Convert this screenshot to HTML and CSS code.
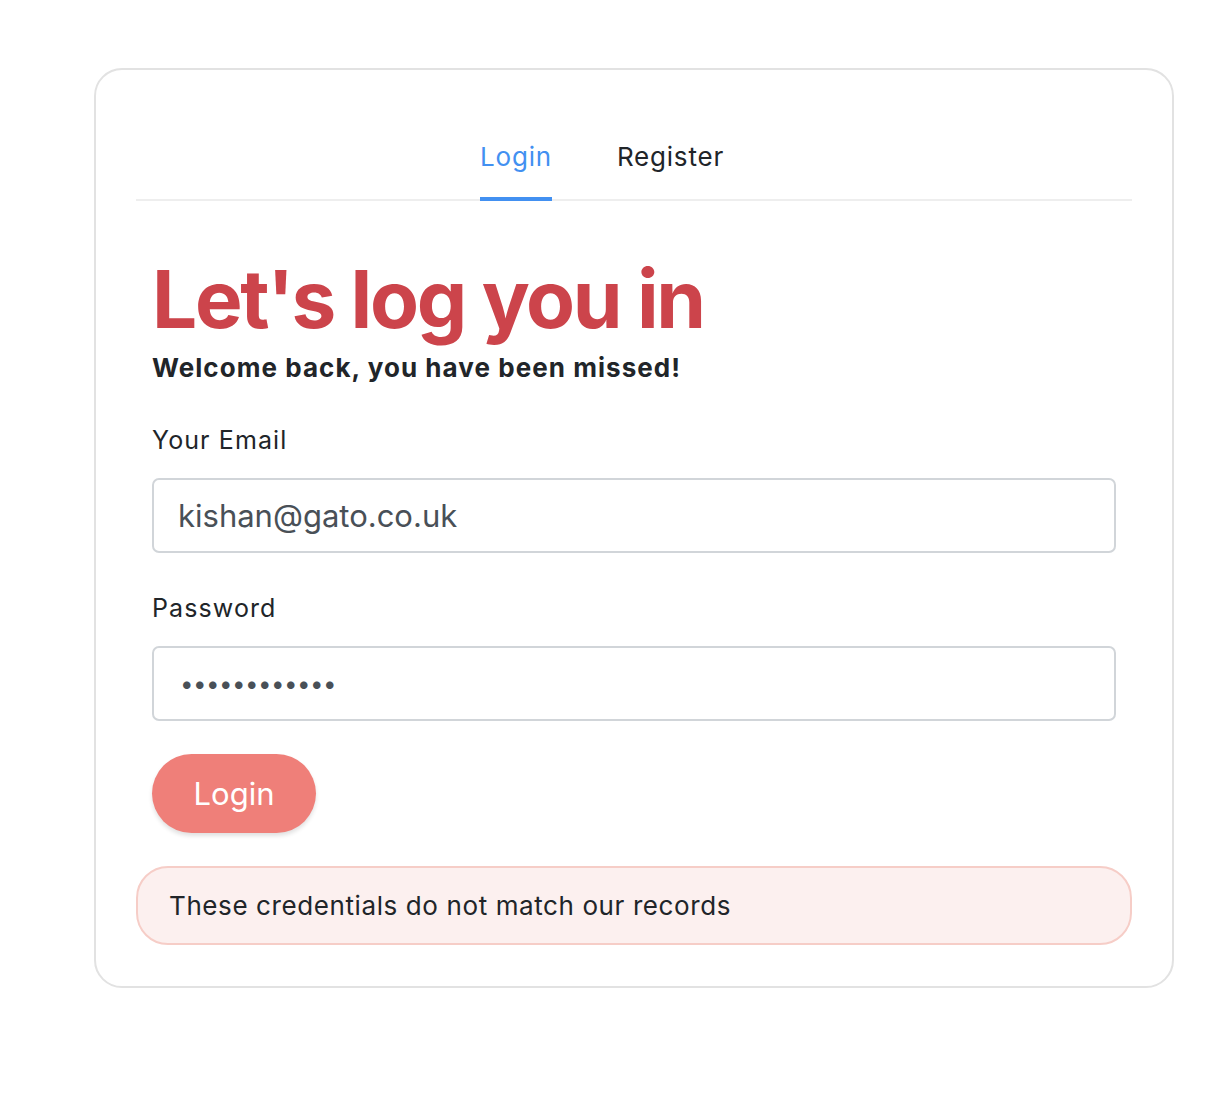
FILE: index.html
```html
<!DOCTYPE html>
<html lang="en">
<head>
<meta charset="utf-8">
<title>Login</title>
<link rel="stylesheet" href="styles.css">
</head>
<body>
<div class="card">
  <nav class="tabs">
    <a class="tab active" href="#">Login</a>
    <a class="tab" href="#">Register</a>
  </nav>
  <form class="form">
    <h1 class="title">Let's log you in</h1>
    <p class="subtitle">Welcome back, you have been missed!</p>
    <label class="label" for="email">Your Email</label>
    <input class="input" id="email" type="email" value="kishan@gato.co.uk">
    <label class="label" for="pw">Password</label>
    <input class="input pw" id="pw" type="password" value="abcdefghijkl">
    <button class="btn" type="button">Login</button>
  </form>
  <div class="alert">These credentials do not match our records</div>
</div>
</body>
</html>
```
FILE: styles.css
```css
* { box-sizing: border-box; }
body {
  margin: 0;
  background: #fff;
  font-family: Inter, "Noto Sans", sans-serif;
  color: #212529;
}
.card {
  margin: 68px 0 0 94px;
  width: 1080px;
  height: 920px;
  border: 2px solid #e2e2e2;
  border-radius: 28px;
  padding: 67px 40px 40px;
}
.tabs {
  display: flex;
  gap: 65px;
  padding-left: 344px;
  border-bottom: 2px solid #eeeeee;
}
.tab {
  font-size: 26px;
  line-height: 39px;
  letter-spacing: 0.8px;
  padding-bottom: 21px;
  margin-bottom: -2px;
  border-bottom: 4px solid transparent;
  color: #212529;
  text-decoration: none;
}
.tab.active {
  color: #4290f1;
  border-bottom-color: #4290f1;
}
.form {
  padding: 0 16px;
  display: flex;
  flex-direction: column;
  align-items: flex-start;
}
.title {
  margin: 50px 0 0;
  font-size: 80px;
  line-height: 96px;
  font-weight: 700;
  color: #cc444b;
  letter-spacing: -2.3px;
}
.subtitle {
  margin: 5px 0 0;
  font-size: 26px;
  line-height: 32px;
  font-weight: 700;
  letter-spacing: 1.05px;
}
.label {
  margin-top: 40px;
  font-size: 25px;
  line-height: 32px;
  letter-spacing: 1.1px;
}
.input {
  margin-top: 22px;
  width: 100%;
  height: 75px;
  border: 2px solid #d1d5d9;
  border-radius: 7px;
  padding: 0 24px;
  font-family: Inter, "Noto Sans", sans-serif;
  font-size: 31px;
  color: #495057;
  outline: none;
}
.input.pw {
  font-size: 24px;
  letter-spacing: -0.5px;
  padding-left: 26px;
}
.input + .label { margin-top: 39px; }
.btn {
  margin-top: 33px;
  width: 164px;
  height: 79px;
  border: none;
  border-radius: 40px;
  background: #ef7f79;
  color: #fff;
  font-family: Inter, "Noto Sans", sans-serif;
  font-size: 31px;
  box-shadow: 0 3px 4px rgba(0,0,0,0.12);
}
.alert {
  margin-top: 33px;
  height: 79px;
  border: 2px solid #f6cdc7;
  border-radius: 32px;
  background: #fcf0ef;
  padding: 0 31px;
  display: flex;
  align-items: center;
  font-size: 26px;
  letter-spacing: 0.6px;
}
```
